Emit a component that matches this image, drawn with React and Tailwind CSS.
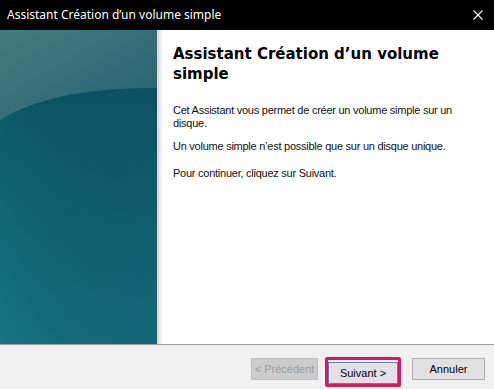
import React from 'react';

const WizardWindow = () => {
  return (
    <div className="w-[494px] h-[389px] flex flex-col bg-white overflow-hidden font-['Liberation_Sans',Arial,sans-serif]">
      {/* Title bar */}
      <div className="h-[30px] shrink-0 bg-black flex items-center justify-between pl-[7px] pr-[10px]">
        <span className="text-white text-[12px] font-['Noto_Sans','Open_Sans',sans-serif] leading-none">
          Assistant Création d’un volume simple
        </span>
        <svg width="10" height="10" viewBox="0 0 10 10" className="mr-[1px]">
          <path d="M0.5 0.5 L9.5 9.5 M9.5 0.5 L0.5 9.5" stroke="#ffffff" strokeWidth="1.1" />
        </svg>
      </div>

      {/* Body */}
      <div className="h-[314px] shrink-0 flex">
        {/* Side banner */}
        <div className="w-[157px] shrink-0 relative bg-gradient-to-b from-[#0a5260] via-[#0f6470] to-[#157585]">
          <svg width="157" height="314" viewBox="0 0 157 314" className="absolute inset-0">
            <defs>
              <linearGradient id="top" x1="0" y1="0" x2="1" y2="1">
                <stop offset="0" stopColor="#437c80" />
                <stop offset="1" stopColor="#266170" />
              </linearGradient>
              <linearGradient id="shade" x1="0" y1="0" x2="1" y2="0">
                <stop offset="0" stopColor="#000000" stopOpacity="0" />
                <stop offset="1" stopColor="#103c5a" stopOpacity="0.25" />
              </linearGradient>
            </defs>
            <rect x="0" y="0" width="157" height="314" fill="url(#shade)" />
            <path d="M0 0 H157 V58 C110 58 45 62 0 90 Z" fill="url(#top)" />
          </svg>
        </div>
        <div className="w-[6px] shrink-0 bg-gradient-to-r from-[#d4d4d4] to-white" />

        {/* Content */}
        <div className="flex-1 pl-[10px] pr-[20px] pt-[14px]">
          <h1 className="font-['DejaVu_Sans',Verdana,sans-serif] font-bold text-[15px] leading-[20px] text-black">
            Assistant Création d’un volume simple
          </h1>
          <p className="mt-[20px] text-[11px] leading-[13px] tracking-[-0.25px] text-[#111]">
            Cet Assistant vous permet de créer un volume simple sur un disque.
          </p>
          <p className="mt-[10px] text-[11px] leading-[13px] tracking-[-0.25px] text-[#111]">
            Un volume simple n’est possible que sur un disque unique.
          </p>
          <p className="mt-[14px] text-[11px] leading-[13px] tracking-[-0.25px] text-[#111]">
            Pour continuer, cliquez sur Suivant.
          </p>
        </div>
      </div>

      {/* Footer */}
      <div className="flex-1 bg-[#f0f0f0] border-t border-[#a0a0a0] flex justify-end items-start pt-[12px] pr-[9px]">
        <button className="w-[67px] h-[22px] mt-[1px] bg-[#cccccc] border border-[#bfbfbf] text-[11px] text-[#9a9a9a] whitespace-nowrap">
          &lt; Précédent
        </button>
        <div className="ml-[7px] border-[3px] border-[#d71a5f] rounded-[2px]">
          <button className="w-[70px] h-[22px] bg-[#e1e1e8] border border-[#6f7a9a] text-[11px] text-black whitespace-nowrap">
            Suivant &gt;
          </button>
        </div>
        <button className="ml-[11px] mt-[1px] w-[73px] h-[22px] bg-[#e1e1e1] border border-[#adadad] text-[11px] text-black whitespace-nowrap">
          Annuler
        </button>
      </div>
    </div>
  );
};

export default function App() {
  return <WizardWindow />;
}
